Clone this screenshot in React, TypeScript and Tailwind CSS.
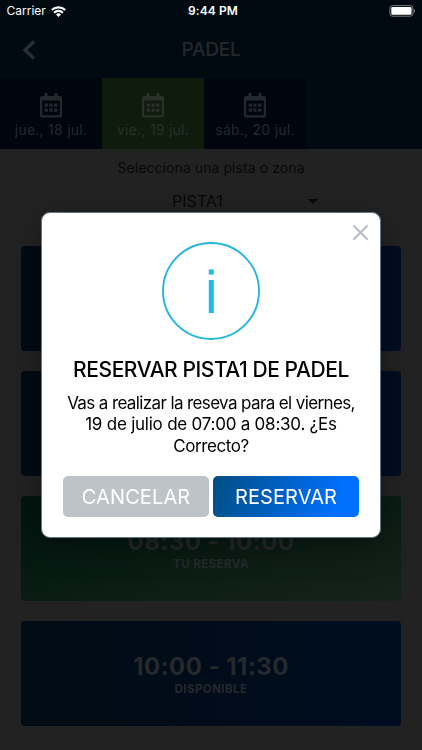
import React from 'react';

interface Day {
  label: string;
  className: string;
}

interface Slot {
  time: string;
  status: string;
  className: string;
}

const days: Day[] = [
  { label: 'jue., 18 jul.', className: 'bg-[#00050e] text-[#25292e]' },
  { label: 'vie., 19 jul.', className: 'bg-[#0f1b0d] text-[#293128]' },
  { label: 'sáb., 20 jul.', className: 'bg-[#00050e] text-[#25292e]' },
];

const blue = 'bg-linear-to-r from-[#000b13] to-[#000d21]';
const green = 'bg-linear-to-br from-[#00150d] to-[#15231a]';

const slots: Slot[] = [
  { time: '07:00 - 08:30', status: 'DISPONIBLE', className: blue },
  { time: '07:30 - 09:00', status: 'DISPONIBLE', className: blue },
  { time: '08:30 - 10:00', status: 'TU RESERVA', className: green },
  { time: '10:00 - 11:30', status: 'DISPONIBLE', className: blue },
];

const CalendarIcon: React.FC = () => (
  <svg width="22" height="25" viewBox="0 0 22 25" fill="currentColor">
    <path d="M4.500 0h3v4h-3zM14.500 0h3v4h-3z" />
    <path
      fillRule="evenodd"
      d="M2.200 3h17.600a2.200 2.200 0 0 1 2.200 2.200v17.100a2.200 2.200 0 0 1-2.200 2.200H2.200A2.200 2.200 0 0 1 0 22.300V5.200A2.200 2.200 0 0 1 2.200 3zM2.200 7.400v14.100a.8.8 0 0 0 .8.8h16a.8.8 0 0 0 .8-.8V7.400z"
    />
    <path d="M4.700 10.500h3.200v3.200H4.700zM9.400 10.500h3.200v3.200H9.400zM14.100 10.500h3.200v3.200h-3.200zM4.700 15.500h3.200v3.200H4.700zM9.400 15.500h3.200v3.200H9.400zM14.100 15.500h3.200v3.200h-3.200z" />
  </svg>
);

const StatusBar: React.FC = () => (
  <div className="h-[22px] px-[6.5px] grid grid-cols-3 items-center text-white text-[12px] leading-none">
    <div className="flex items-center gap-[5.5px]">
      Carrier
      <svg width="15" height="11" viewBox="0 0 15 11" fill="none" stroke="currentColor" strokeWidth="2.1">
        <path d="M0.8 4.1a9.5 9.5 0 0 1 13.4 0" />
        <path d="M3.1 6.7a6.2 6.2 0 0 1 8.800 0" />
        <path d="M5 8.4a3.6 3.6 0 0 1 5 0L7.5 11z" fill="currentColor" stroke="none" />
      </svg>
    </div>
    <div className="text-center pl-1 font-semibold tracking-[0.1px] whitespace-nowrap">9:44 PM</div>
    <svg className="justify-self-end" width="27" height="12" viewBox="0 0 27 12" fill="none">
      <rect x="1.9" y="0.6" width="23" height="10.6" rx="2.6" stroke="#777c80" />
      <rect x="3.3" y="2" width="20.2" height="7.8" rx="1.2" fill="#fff" />
      <path d="M25.700 4v4c.8-.3 1.300-1.100 1.300-2s-.5-1.700-1.300-2z" fill="#777c80" />
    </svg>
  </div>
);

const Header: React.FC = () => (
  <header className="h-[56px] px-[22px] grid grid-cols-[30px_1fr_30px] items-center">
    <svg width="14" height="20" viewBox="0 0 14 20" fill="none" stroke="#2b2e31" strokeWidth="3.4">
      <path d="M12 1.400L3 10l9 8.600" />
    </svg>
    <h1 className="text-center text-[19px] font-medium tracking-[-0.2px] text-[#24282c]">PADEL</h1>
  </header>
);

const DayTabs: React.FC = () => (
  <div className="h-[71px] flex">
    {days.map((day) => (
      <button key={day.label} className={`w-[102px] flex flex-col items-center pt-[15px] ${day.className}`}>
        <CalendarIcon />
        <span className="mt-[2px] text-[14px] leading-5 tracking-[0.25px] whitespace-nowrap">{day.label}</span>
      </button>
    ))}
  </div>
);

const SlotCard: React.FC<{ slot: Slot }> = ({ slot }) => (
  <div className={`h-[105px] shrink-0 rounded-[4px] flex flex-col items-center pt-[31px] ${slot.className}`}>
    <div className="text-[24px] leading-[30px] font-bold tracking-[0.45px] text-[#26292c] whitespace-nowrap">{slot.time}</div>
    <div className="text-[11.5px] leading-[14px] font-bold tracking-[0.45px] text-[#26292c]">{slot.status}</div>
  </div>
);

const ConfirmModal: React.FC = () => (
  <div className="fixed inset-0 flex justify-center items-start pt-[211.5px]">
    <div className="relative w-[340px] h-[326px] bg-white rounded-[9px] border border-[#65788a] shadow-[0_10px_30px_rgba(0,0,0,0.35)] px-[21px] flex flex-col items-center text-black">
      <button className="absolute right-[12px] top-[12px]">
        <svg width="15" height="15" viewBox="0 0 15 15" stroke="#b4bcc8" strokeWidth="1.900" strokeLinecap="round">
          <path d="M1 1l13 13M14 1L1 14" />
        </svg>
      </button>
      <svg className="mt-[29px] shrink-0" width="98" height="98" viewBox="0 0 98 98" fill="none">
        <circle cx="49" cy="49" r="48" stroke="#22b6de" strokeWidth="1.9" />
        <path d="M46.800 27.500h5v5h-5zM46.800 38h5v33h-5z" fill="#1bbce6" />
      </svg>
      <h2 className="mt-[17px] text-[21px] leading-[26px] font-medium tracking-[-0.43px] whitespace-nowrap">
        RESERVAR PISTA1 DE PADEL
      </h2>
      <p className="mt-[10.5px] text-[17px] leading-[21.4px] text-center whitespace-nowrap">
        <span className="block tracking-[-0.62px]">Vas a realizar la reseva para el viernes,</span>
        <span className="block tracking-[-0.23px]">19 de julio de 07:00 a 08:30. ¿Es</span>
        <span className="block tracking-[-0.4px]">Correcto?</span>
      </p>
      <div className="mt-[18.5px] w-full flex gap-1 text-white text-[20px] tracking-[0.1px]">
        <button className="h-[41px] w-[146px] pt-px rounded-[5px] bg-[#bdc3c7]">CANCELAR</button>
        <button className="h-[41px] w-[146px] pt-px rounded-[5px] bg-linear-[110deg,#004e82,#0070ff_85%]">RESERVAR</button>
      </div>
    </div>
  </div>
);

export default function App() {
  return (
    <div className="w-[422px] h-[750px] overflow-hidden bg-[#222222] font-['Inter','Liberation_Sans',sans-serif]">
      <div className="bg-[#000a10]">
        <StatusBar />
        <Header />
        <DayTabs />
      </div>
      <div className="h-[96.6px] flex flex-col items-center pt-[9px] text-[#080808]">
        <div className="text-[14px] leading-5 tracking-[0.08px]">Selecciona una pista o zona</div>
        <div className="mt-[13px] w-full pl-[172px] flex items-center text-[16px] leading-5">
          <span className="w-[136px]">PISTA1</span>
          <svg width="10" height="5" viewBox="0 0 10 5" fill="currentColor">
            <path d="M0 0h10L5 5z" />
          </svg>
        </div>
      </div>
      <div className="px-[21px] flex flex-col gap-[20.3px]">
        {slots.map((slot) => (
          <SlotCard key={slot.time} slot={slot} />
        ))}
      </div>
      <ConfirmModal />
    </div>
  );
}
